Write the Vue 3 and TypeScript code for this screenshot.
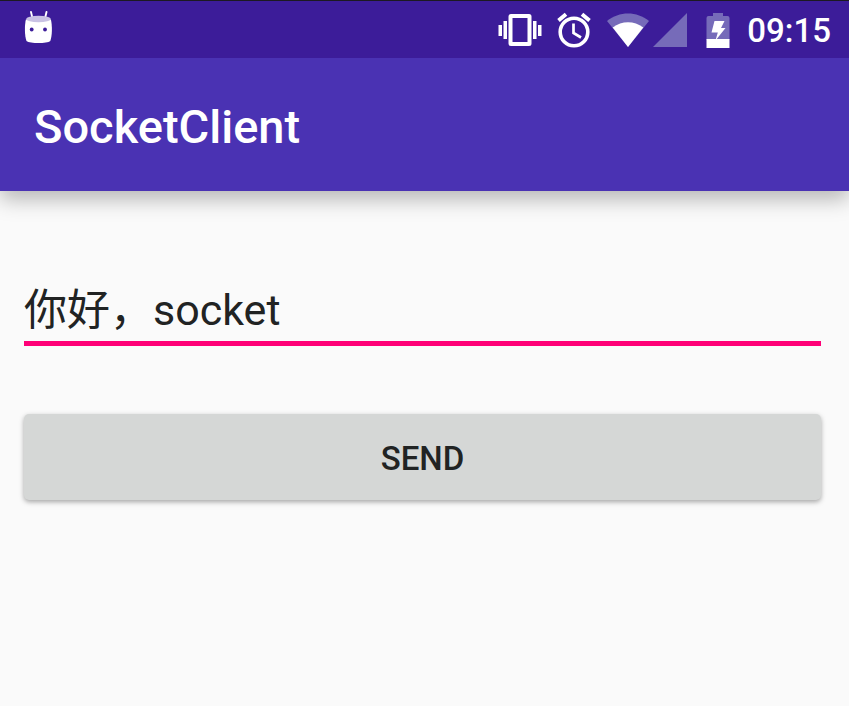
<script setup lang="ts">
import { ref } from 'vue'

const message = ref('你好，socket')
const time = ref('09:15')

function send(): void {
  message.value = message.value.trim()
}
</script>

<template>
  <div class="screen">
    <div class="status">
      <svg class="robot" width="29" height="33" viewBox="0 0 29 33" aria-hidden="true">
        <path d="M7 1l1.400 6M22.500 1l-1.400 6" stroke="#fff" stroke-width="1.900" fill="none" stroke-linecap="round" />
        <path d="M1.900 8.500C0.500 14 0.500 25 2.500 30C6 32.800 23 32.800 26.300 30C28.300 25 28.300 14 26.900 8.500Z" fill="#fff" />
        <ellipse cx="14.500" cy="8" rx="12.300" ry="3.300" fill="#c9c2e4" />
        <circle cx="7.700" cy="18.500" r="1.900" fill="#3c1c99" />
        <circle cx="21" cy="18.500" r="1.900" fill="#3c1c99" />
      </svg>
      <div class="indicators">
        <svg class="vibrate" width="44" height="34" viewBox="0 0 44 34" aria-hidden="true">
          <path fill="#fff" fill-rule="evenodd" d="M13 1h18a2.500 2.500 0 0 1 2.500 2.500v27a2.500 2.500 0 0 1-2.500 2.500h-18a2.500 2.500 0 0 1-2.500-2.500v-27a2.500 2.500 0 0 1 2.500-2.500zM14.500 5v24h15v-24z" />
          <path fill="#fff" d="M0.500 12h3.500v11h-3.500zM5.500 8h3.500v18h-3.500zM35 8h3.500v18h-3.500zM40 12h3.500v11h-3.500z" />
        </svg>
        <svg class="alarm" width="34" height="36" viewBox="0 0 34 36" fill="none" stroke="#fff" aria-hidden="true">
          <circle cx="17" cy="20" r="13.800" stroke-width="3.600" />
          <path d="M1.500 8.500L9 2.200M25 2.200L32.500 8.500" stroke-width="3.900" />
          <path d="M16.500 11.500v9.500l7.500 4.500" stroke-width="2.700" />
        </svg>
        <svg class="wifi" width="42" height="34" viewBox="0 0 42 34" aria-hidden="true">
          <path d="M0 8C12-2 30-2 42 8L21 34Z" fill="#766bb9" />
          <path d="M5.700 14.500C15 7.500 27 7.500 36.300 14.500L21 34Z" fill="#fff" />
        </svg>
        <svg class="signal" width="34" height="34" viewBox="0 0 34 34" aria-hidden="true">
          <path d="M0 34L34 0V34Z" fill="#766bb9" />
        </svg>
        <svg class="battery" width="24" height="35" viewBox="0 0 24 35" aria-hidden="true">
          <path d="M7 0h10v3h4.500a2 2 0 0 1 2 2v22h-23v-22a2 2 0 0 1 2-2h4.500z" fill="#766bb9" />
          <path d="M0.500 26h23v9h-23z" fill="#fff" />
          <path d="M8.500 8H18.500L15 15H19.500L9.500 27.500L11.800 19.500H5.500Z" fill="#fff" />
        </svg>
        <time class="clock">{{ time }}</time>
      </div>
    </div>
    <header class="appbar">
      <h1>SocketClient</h1>
    </header>
    <form class="content" @submit.prevent="send">
      <input v-model="message" class="field" type="text" aria-label="Message" spellcheck="false" />
      <button class="send" type="submit">SEND</button>
    </form>
  </div>
</template>

<style>
body {
  margin: 0;
  background: #fafafa;
}
</style>

<style scoped>
.screen {
  min-height: 100vh;
  background: #fafafa;
  font-family: Roboto, "Noto Sans CJK SC", sans-serif;
  color: #212323;
}

.status {
  position: relative;
  z-index: 2;
  box-sizing: border-box;
  height: 58px;
  display: flex;
  justify-content: space-between;
  align-items: flex-start;
  padding: 10px 18px 0 24px;
  border-top: 1px solid #1c1922;
  background: #3c1c99;
  color: #fff;
}

svg {
  display: block;
  flex: none;
}

.indicators {
  display: flex;
  align-items: center;
  height: 38px;
}

.alarm {
  margin-left: 15px;
}

.wifi {
  margin-left: 16px;
}

.signal {
  margin-left: 4px;
}

.battery {
  margin-left: 19px;
}

.clock {
  margin-left: 17px;
  padding-top: 2px;
  font-size: 33px;
  line-height: 38px;
  font-weight: 500;
}

.appbar {
  position: relative;
  z-index: 1;
  box-sizing: border-box;
  height: 133px;
  display: flex;
  align-items: center;
  padding: 4px 34px 0;
  background: #4a32b3;
  color: #fff;
  box-shadow: 0 8px 20px rgba(0, 0, 0, 0.28);
}

h1 {
  margin: 0;
  font-size: 47px;
  line-height: 56px;
  font-weight: 500;
}

.content {
  display: flex;
  flex-direction: column;
  gap: 68px;
  padding: 84px 28px 24px 24px;
}

.field {
  box-sizing: border-box;
  width: 100%;
  height: 71px;
  padding: 0 0 4px;
  border: 0;
  border-bottom: 5px solid #ff0077;
  border-radius: 0;
  outline: none;
  background: transparent;
  color: inherit;
  font-family: inherit;
  font-size: 43px;
}

.send {
  height: 86px;
  padding: 3px 0 0;
  border: 0;
  border-radius: 5px;
  background: #d5d7d6;
  color: inherit;
  font-family: inherit;
  font-size: 33px;
  font-weight: 500;
  box-shadow: 0 2px 5px rgba(0, 0, 0, 0.34);
}
</style>
